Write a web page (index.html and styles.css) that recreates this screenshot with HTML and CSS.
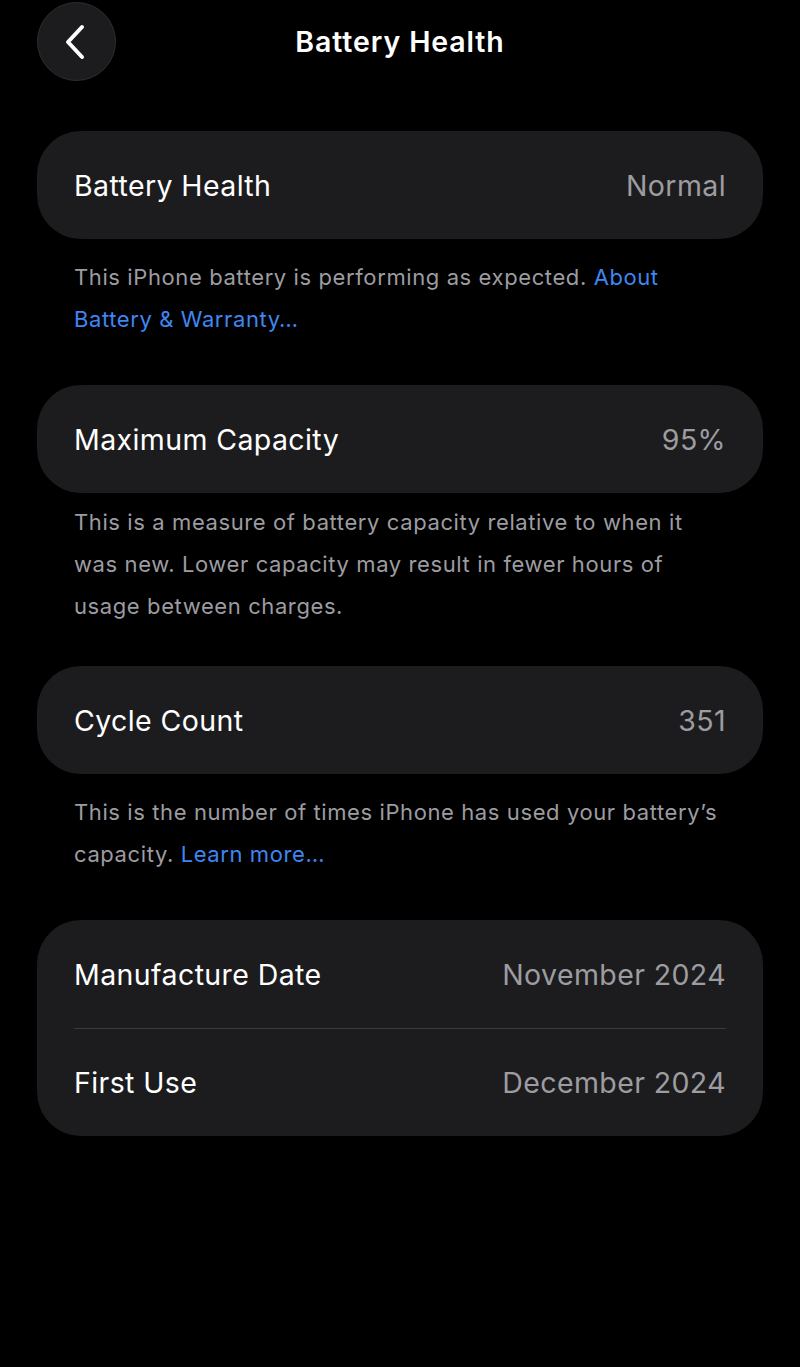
FILE: index.html
```html
<!DOCTYPE html>
<html lang="en">
<head>
<meta charset="utf-8">
<title>Battery Health</title>
<link rel="stylesheet" href="styles.css">
</head>
<body>
<div class="screen">
  <header class="nav">
    <button class="back" aria-label="Back">
      <svg viewBox="0 0 24 36" width="24" height="36"><path d="M19 3 L5 18 L19 33" fill="none" stroke="#fff" stroke-width="4" stroke-linecap="round" stroke-linejoin="round"/></svg>
    </button>
    <h1 class="title">Battery Health</h1>
  </header>

  <section class="group">
    <div class="card">
      <div class="row"><span class="label">Battery Health</span><span class="value">Normal</span></div>
    </div>
    <p class="footer">This iPhone battery is performing as expected. <a class="link">About Battery &amp; Warranty…</a></p>
  </section>

  <section class="group">
    <div class="card">
      <div class="row"><span class="label">Maximum Capacity</span><span class="value">95%</span></div>
    </div>
    <p class="footer footer-tight">This is a measure of battery capacity relative to when it was new. Lower capacity may result in fewer hours of usage between charges.</p>
  </section>

  <section class="group">
    <div class="card">
      <div class="row"><span class="label">Cycle Count</span><span class="value">351</span></div>
    </div>
    <p class="footer">This is the number of times iPhone has used your battery’s capacity. <a class="link">Learn more…</a></p>
  </section>

  <section class="group">
    <div class="card">
      <div class="row"><span class="label">Manufacture Date</span><span class="value">November 2024</span></div>
      <div class="row"><span class="label">First Use</span><span class="value">December 2024</span></div>
    </div>
  </section>
</div>
</body>
</html>
```

FILE: styles.css
```css
html, body {
  margin: 0;
  padding: 0;
  background: #000;
}
body {
  font-family: Inter, "Noto Sans", "Liberation Sans", sans-serif;
  color: #fff;
  width: 800px;
  min-height: 1367px;
}
.screen {
  padding: 0 37px;
}
.nav {
  position: relative;
  height: 82px;
  display: flex;
  align-items: center;
  justify-content: center;
  margin-bottom: 49px;
}
.back {
  position: absolute;
  left: 0;
  top: 2px;
  width: 79px;
  height: 79px;
  border-radius: 50%;
  background: #1c1c1e;
  border: 1px solid #2e2e31;
  display: flex;
  align-items: center;
  justify-content: center;
  padding: 0 4px 0 0;
  box-sizing: border-box;
}
.title {
  margin: 0;
  font-size: 28.5px;
  font-weight: 600;
  letter-spacing: 0.9px;
  color: #fff;
}
.group {
  margin-bottom: 45px;
}
.card {
  background: #1c1c1e;
  border-radius: 44px;
  padding: 0 37px;
}
.row {
  height: 108px;
  display: flex;
  align-items: center;
  justify-content: space-between;
  font-size: 28.5px;
  letter-spacing: 0.4px;
}
.row + .row {
  border-top: 1.5px solid #3a3a3c;
  height: 107px;
}
.label {
  color: #fff;
}
.value {
  color: #9c9ca1;
}
.footer {
  margin: 17px 0 0;
  padding: 0 37px;
  font-size: 22px;
  line-height: 42px;
  color: #9c9ca1;
  letter-spacing: 0.6px;
}
.footer-tight {
  margin-top: 8px;
  margin-bottom: -6px;
}
.link {
  color: #3f86f2;
}
```
